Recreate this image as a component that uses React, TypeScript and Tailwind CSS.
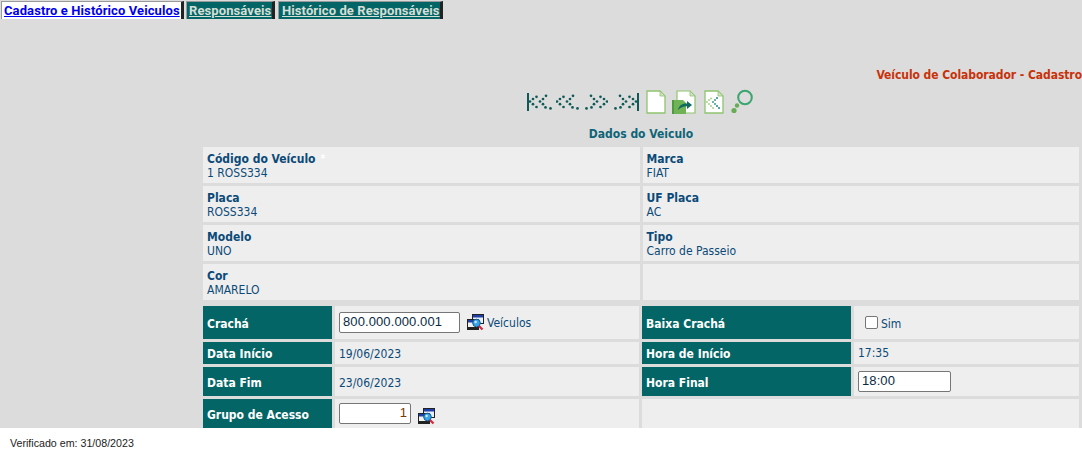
import React from "react";

const F = "font-['DejaVu_Sans_Condensed','DejaVu_Sans',sans-serif]";

function Dots({ dir }: { dir: "l" | "r" }) {
  const pts: [number, number][] = [
    [0.5, 6.5], [3.5, 4], [7, 1.8], [3.5, 9.2], [7, 12],
    [10.5, 6.5], [13.5, 4], [16.5, 0.8], [13.5, 9.2], [16, 12.4], [21, 13.4],
  ];
  return (
    <svg width="23" height="16" viewBox="-0.5 -1 23 16" className="block">
      <g transform={dir === "r" ? "translate(22,0) scale(-1,1)" : undefined} fill="#0f5a56">
        {pts.map(([x, y], i) => (
          <circle key={i} cx={x} cy={y} r="1.35" />
        ))}
      </g>
    </svg>
  );
}

function Bar() {
  return <span className="w-[2px] h-[18px] bg-[#0f5a56]" />;
}

function Doc({ children, w = 20 }: { children?: React.ReactNode; w?: number }) {
  return (
    <svg width={w} height="24" viewBox="0 0 20 24" className="block">
      <path d="M1 1H14L19 6V23H1Z" fill="#fff" stroke="#8fc46f" strokeWidth="1.3" />
      <path d="M14 1V6H19Z" fill="#cfe3bf" stroke="#8fc46f" strokeWidth="0.8" />
      {children}
    </svg>
  );
}

function DocOpen() {
  return (
    <svg width="24" height="24" viewBox="0 0 24 24" className="block">
      <path d="M5 1H18L23 6V23H5Z" fill="#fff" stroke="#8fc46f" strokeWidth="1.2" />
      <path d="M18 1V6H23Z" fill="#cfe3bf" stroke="#8fc46f" strokeWidth="0.8" />
      <path d="M0 10H11L14 13V24H0Z" fill="#6fb356" />
      <rect x="0" y="10" width="2" height="14" fill="#4f9a3f" />
      <path d="M6 20C7 15 11 13 15 13.5V11L20 15L15 19V16.2C12 16 9 17 6 20Z" fill="#0f6a60" />
    </svg>
  );
}

function DocBack() {
  const pts: [number, number, string][] = [
    [3, 12, "#a9d08e"], [5, 10, "#a9d08e"], [7, 8.5, "#a9d08e"], [5, 14, "#a9d08e"], [7, 16, "#a9d08e"], [9, 18, "#a9d08e"],
    [9, 12, "#3aa088"], [11, 10, "#3aa088"], [13, 8, "#1f8a80"], [11, 14, "#3aa088"], [13, 16, "#1f8a80"], [15, 18, "#1f8a80"],
  ];
  return (
    <Doc>
      {pts.map(([x, y, c], i) => (
        <circle key={i} cx={x} cy={y} r="1" fill={c} />
      ))}
    </Doc>
  );
}

function Lens() {
  return (
    <svg width="22" height="25" viewBox="0 0 22 25" className="block">
      <circle cx="14" cy="8.5" r="6.8" fill="none" stroke="#3aa56f" strokeWidth="2" />
      <circle cx="6" cy="16.5" r="2.2" fill="#66ad55" />
      <circle cx="3" cy="21.5" r="2.6" fill="#66ad55" />
    </svg>
  );
}

function Lookup() {
  return (
    <svg width="17" height="17" viewBox="0 0 17 17" className="shrink-0 block">
      <rect x="5.5" y="0.5" width="11" height="9" fill="#e8eef8" stroke="#222" />
      <rect x="6" y="1" width="10" height="2.5" fill="#1f3fa8" />
      <rect x="0.5" y="5.5" width="11" height="10" fill="#f2f2f2" stroke="#222" />
      <rect x="1" y="6" width="10" height="2.5" fill="#1f3fa8" />
      <rect x="1" y="13" width="10" height="3" fill="#222" />
      <circle cx="9.5" cy="9" r="3.8" fill="#39a3e6" stroke="#0b5f96" />
      <circle cx="8.6" cy="8" r="1.2" fill="#cdefff" />
      <path d="M12 12L15.5 15.5" stroke="#d8243c" strokeWidth="2.2" />
    </svg>
  );
}

function Info({ label, value, star }: { label?: string; value?: string; star?: boolean }) {
  return (
    <div className="bg-[#eeeeee] h-[36px] pl-[4px] pt-[5px] flex flex-col">
      {label && (
        <span className="text-[12px] leading-[14px] font-bold text-[#0b4a78]">
          {label}
          {star && <span className="text-white ml-[5px] text-[10px] align-top">*</span>}
        </span>
      )}
      {value && <span className="text-[12px] leading-[14px] text-[#0b4a78]">{value}</span>}
    </div>
  );
}

function Label({ children, className = "pt-[2px]" }: { children: React.ReactNode; className?: string }) {
  return (
    <div className={`bg-[#046567] text-white font-bold text-[12px] flex items-center pl-[4px] h-full ${className}`}>
      {children}
    </div>
  );
}

function Val({ children, className = "" }: { children?: React.ReactNode; className?: string }) {
  return (
    <div className={`bg-[#eeeeee] text-[#0b4a78] text-[12px] flex h-full ${className}`}>
      {children}
    </div>
  );
}

function Field({ value, w, right }: { value: string; w: string; right?: boolean }) {
  return (
    <div
      className={`${w} h-[21px] bg-white border border-[#767676] rounded-[2px] text-[13px] leading-[18px] px-[3px] text-[#0a2a44] tracking-[0.1px] font-['Liberation_Sans',sans-serif] ${
        right ? "text-right text-[#7a3b00]" : ""
      }`}
    >
      {value}
    </div>
  );
}

const tab =
  "h-[18px] border-t border-l border-[#9a9a9a] border-r-[3px] border-r-[#222] underline font-bold text-[13px] leading-[18px] tracking-[0.1px] whitespace-nowrap font-['Roboto',sans-serif]";

export default function App() {
  return (
    <div className={`h-[458px] w-[1082px] bg-white flex flex-col overflow-hidden ${F}`}>
      <div className="h-[428px] bg-[#dcdcdc] flex flex-col overflow-hidden">
        <div className="flex items-start pt-[1px] pl-[1px] h-[19px] shrink-0">
          <a className={`${tab} w-[183px] pl-[2px] bg-white text-[#0000ee]`}>Cadastro e Histórico Veiculos</a>
          <a className={`${tab} ml-[2px] w-[89px] pl-[2px] bg-[#046567] text-[#d5dfd5]`}>Responsáveis</a>
          <a className={`${tab} ml-[3px] w-[165px] pl-[3px] bg-[#046567] text-[#d5dfd5]`}>Histórico de Responsáveis</a>
        </div>

        <div className="mt-[48px] text-right text-[#c8320a] font-bold text-[12px] leading-[16px] tracking-[-0.06px] whitespace-nowrap">
          Veículo de Colaborador - Cadastro
        </div>

        <div className="pl-[203px] pr-[3px]">
          <div className="mt-[6px] h-[25px] flex items-center justify-center">
            <div className="flex items-center pr-[2px]">
              <Bar />
              <Dots dir="l" />
              <span className="ml-[4px]"><Dots dir="l" /></span>
              <span className="ml-[6px]"><Dots dir="r" /></span>
              <span className="ml-[6px]"><Dots dir="r" /></span>
              <Bar />
              <span className="ml-[7px]"><Doc /></span>
              <span className="ml-[6px]"><DocOpen /></span>
              <span className="ml-[8px]"><DocBack /></span>
              <span className="ml-[7px]"><Lens /></span>
            </div>
          </div>
          <div className="mt-[10px] mb-[3px] h-[20px] text-center text-[#0f6478] font-bold text-[12px] leading-[20px]">
            Dados do Veiculo
          </div>

          <div className="grid grid-cols-2 gap-[3px]">
            <Info label="Código do Veículo" value="1 ROSS334" star />
            <Info label="Marca" value="FIAT" />
            <Info label="Placa" value="ROSS334" />
            <Info label="UF Placa" value="AC" />
            <Info label="Modelo" value="UNO" />
            <Info label="Tipo" value="Carro de Passeio" />
            <Info label="Cor" value="AMARELO" />
            <Info />
          </div>

          <div className="mt-[6px] grid grid-cols-[129px_304px_209px_225px] grid-rows-[33px_22px_29px_31px] gap-[3px]">
            <Label>Crachá</Label>
            <Val className="pl-[4px] items-center">
              <Field value="800.000.000.001" w="w-[121px]" />
              <span className="ml-[7px]"><Lookup /></span>
              <span className="ml-[3px]">Veículos</span>
            </Val>
            <Label>Baixa Crachá</Label>
            <Val className="pl-[11px] items-center">
              <span className="w-[13px] h-[13px] bg-white border border-[#767676] rounded-[2px]" />
              <span className="ml-[3px] mt-[3px]">Sim</span>
            </Val>

            <Label>Data Início</Label>
            <Val className="pl-[4px] pt-[2px] items-center">19/06/2023</Val>
            <Label>Hora de Início</Label>
            <Val className="pl-[4px] items-center">17:35</Val>

            <Label>Data Fim</Label>
            <Val className="pl-[4px] pt-[2px] items-center">23/06/2023</Val>
            <Label>Hora Final</Label>
            <Val className="pl-[4px] items-center">
              <Field value="18:00" w="w-[93px]" />
            </Val>

            <Label className="pt-0">Grupo de Acesso</Label>
            <Val className="pl-[4px] pt-[4px] items-start">
              <Field value="1" w="w-[72px]" right />
              <span className="ml-[7px] mt-[5px]"><Lookup /></span>
            </Val>
            <div className="col-span-2 bg-[#eeeeee]" />
          </div>
        </div>
      </div>
      <div className="flex-1 flex items-center pl-[10px] font-['Liberation_Sans',sans-serif] text-[10.67px] text-[#222]">
        Verificado em: 31/08/2023
      </div>
    </div>
  );
}
